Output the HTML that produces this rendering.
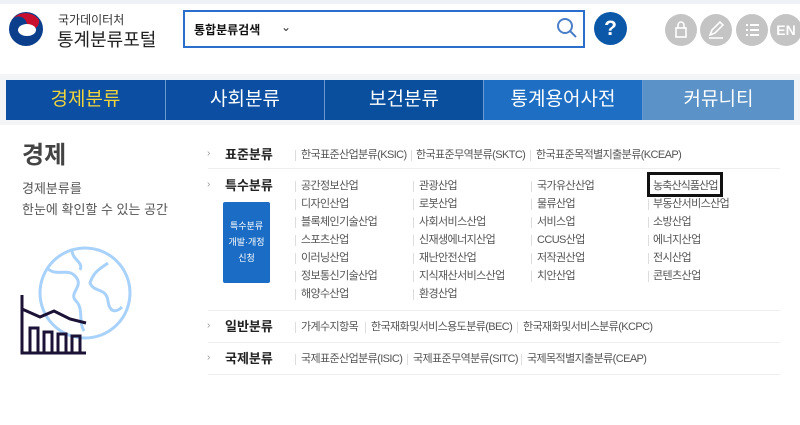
<!DOCTYPE html>
<html><head><meta charset="utf-8"><style>
*{margin:0;padding:0;box-sizing:border-box}
body{width:800px;height:425px;background:#fff;font-family:"Liberation Sans","Noto Sans CJK KR",sans-serif;position:relative;overflow:hidden}
.a{position:absolute;white-space:nowrap}
.tab{position:absolute;top:80px;height:40px;color:#fff;font-size:19px;text-align:center;line-height:40px;border-right:1px solid #6a9ad0}
.t{position:absolute;white-space:nowrap;font-size:11px;color:#555;letter-spacing:-0.6px;line-height:14px}
.p{position:absolute;width:1px;height:11px;background:#ddd}
.lbl{position:absolute;font-size:13px;font-weight:bold;color:#222;line-height:16px}
.ar{position:absolute;font-size:10px;color:#999;line-height:12px}
.hr{position:absolute;left:208px;width:572px;height:1px;background:#eee}
.ic{position:absolute;top:14px;width:32px;height:32px;border-radius:50%;background:#c4c4c4;color:#fff}
</style></head><body>
<div class="a" style="left:0;top:0;width:800px;height:4px;background:#eef1f5"></div>
<svg class="a" style="left:7px;top:9px" width="38" height="40" viewBox="0 0 38 40"><circle cx="19" cy="20" r="17" fill="#0b3f8c"/><path d="M4 12a17 17 0 0 1 28 -1a9 9 0 0 1-13 9a8 8 0 0 0-15 -8z" fill="#c8102e"/><ellipse cx="20" cy="21" rx="9" ry="6" fill="#fff"/></svg>
<div class="a" style="left:58px;top:11px;font-size:12px;color:#333">국가데이터처</div>
<div class="a" style="left:57px;top:26px;font-size:18px;color:#222">통계분류포털</div>
<div class="a" style="left:183px;top:10px;width:402px;height:38px;border:2px solid #2a6fcb;background:#fff"></div>
<div class="a" style="left:194px;top:21px;font-size:12px;font-weight:bold;color:#111">통합분류검색</div>
<div class="a" style="left:281px;top:20px;font-size:12px;color:#333">⌄</div>
<svg class="a" style="left:555px;top:15px" width="24" height="26" viewBox="0 0 24 26"><circle cx="10" cy="11" r="7" fill="none" stroke="#4a7fc8" stroke-width="2"/><line x1="15" y1="16" x2="21" y2="22" stroke="#4a7fc8" stroke-width="2"/></svg>
<div class="a" style="left:594px;top:12px;width:33px;height:33px;border-radius:50%;background:#0b57a8;color:#fff;font-size:21px;font-weight:bold;text-align:center;line-height:33px">?</div>
<div class="ic" style="left:665px"><svg width="32" height="32"><rect x="11" y="14" width="10" height="9" fill="none" stroke="#fff" stroke-width="1.6"/><path d="M13 14v-3a3 3 0 0 1 6 0v3" fill="none" stroke="#fff" stroke-width="1.6"/></svg></div>
<div class="ic" style="left:700px"><svg width="32" height="32"><path d="M10 21l2-5 8-8 3 3-8 8z M9 24h14" fill="none" stroke="#fff" stroke-width="1.6"/></svg></div>
<div class="ic" style="left:736px"><svg width="32" height="32"><path d="M10 11h2M14 11h9M10 16h2M14 16h9M10 21h2M14 21h9" stroke="#fff" stroke-width="2"/></svg></div>
<div class="ic" style="left:770px;font-size:14px;font-weight:bold;text-align:center;line-height:32px">EN</div>
<div class="a" style="left:0;top:74px;width:800px;height:51px;background:#f2f4f6"></div>
<div class="tab" style="left:6px;width:160px;background:#0b4ea2;color:#f1d53a">경제분류</div>
<div class="tab" style="left:166px;width:159px;background:#0b4ea2">사회분류</div>
<div class="tab" style="left:325px;width:159px;background:#0a4f9e">보건분류</div>
<div class="tab" style="left:484px;width:159px;background:#1e6fc4">통계용어사전</div>
<div class="tab" style="left:643px;width:151px;background:#5b92c7;border-right:none">커뮤니티</div>
<div class="a" style="left:6px;top:125px;width:788px;height:295px;background:#fff;border-radius:0 0 6px 6px"></div>
<div class="a" style="left:22px;top:135px;font-size:24px;font-weight:bold;color:#444">경제</div>
<div class="a" style="left:22px;top:178px;font-size:13px;color:#555;line-height:21px">경제분류를<br>한눈에 확인할 수 있는 공간</div>
<svg class="a" style="left:20px;top:245px" width="115" height="115" viewBox="0 0 115 115"><g fill="none" stroke="#a8d2fb" stroke-width="3"><circle cx="65" cy="48" r="45"/><path d="M28 24c10 8 20 -2 28 8s-8 16 0 24 2 20 8 30M52 5c0 10 12 12 8 20M88 18c-8 6-14 8-18 20 4 10 16 4 18 18s10 10 14 6"/></g><g fill="none" stroke="#1b1236" stroke-width="3"><path d="M2 50v58h64"/><path d="M2 64l18 8 14-6 16 8 16 4"/><path d="M10 107v-24h8v24M24 107v-20h8v20M38 107v-18h8v18M52 107v-16h8v16"/></g></svg>

<div class="ar" style="left:207px;top:148px">›</div><div class="lbl" style="left:225px;top:147px">표준분류</div>
<div class="ar" style="left:207px;top:179px">›</div><div class="lbl" style="left:225px;top:178px">특수분류</div>
<div class="ar" style="left:207px;top:320px">›</div><div class="lbl" style="left:225px;top:319px">일반분류</div>
<div class="ar" style="left:207px;top:352px">›</div><div class="lbl" style="left:225px;top:351px">국제분류</div>
<div class="a" style="left:223px;top:202px;width:47px;height:81px;background:#1a6cc4;border-radius:2px;color:#fff;font-size:9px;text-align:center;line-height:16px;padding-top:16px">특수분류<br>개발·개정<br>신청</div>

<div class="hr" style="top:168px"></div>
<div class="hr" style="top:310px"></div>
<div class="hr" style="top:342px"></div>
<div class="hr" style="top:374px"></div>

<div class="p" style="left:295px;top:150px"></div><div class="t" style="left:301px;top:148px">한국표준산업분류(KSIC)</div>
<div class="p" style="left:411px;top:150px"></div><div class="t" style="left:416px;top:148px">한국표준무역분류(SKTC)</div>
<div class="p" style="left:530px;top:150px"></div><div class="t" style="left:536px;top:148px">한국표준목적별지출분류(KCEAP)</div>

<div class="p" style="left:295px;top:181px"></div><div class="t" style="left:301px;top:179px">공간정보산업</div>
<div class="p" style="left:295px;top:199px"></div><div class="t" style="left:301px;top:197px">디자인산업</div>
<div class="p" style="left:295px;top:217px"></div><div class="t" style="left:301px;top:215px">블록체인기술산업</div>
<div class="p" style="left:295px;top:235px"></div><div class="t" style="left:301px;top:233px">스포츠산업</div>
<div class="p" style="left:295px;top:253px"></div><div class="t" style="left:301px;top:251px">이러닝산업</div>
<div class="p" style="left:295px;top:271px"></div><div class="t" style="left:301px;top:269px">정보통신기술산업</div>
<div class="p" style="left:295px;top:289px"></div><div class="t" style="left:301px;top:287px">해양수산업</div>

<div class="p" style="left:413px;top:181px"></div><div class="t" style="left:419px;top:179px">관광산업</div>
<div class="p" style="left:413px;top:199px"></div><div class="t" style="left:419px;top:197px">로봇산업</div>
<div class="p" style="left:413px;top:217px"></div><div class="t" style="left:419px;top:215px">사회서비스산업</div>
<div class="p" style="left:413px;top:235px"></div><div class="t" style="left:419px;top:233px">신재생에너지산업</div>
<div class="p" style="left:413px;top:253px"></div><div class="t" style="left:419px;top:251px">재난안전산업</div>
<div class="p" style="left:413px;top:271px"></div><div class="t" style="left:419px;top:269px">지식재산서비스산업</div>
<div class="p" style="left:413px;top:289px"></div><div class="t" style="left:419px;top:287px">환경산업</div>

<div class="p" style="left:531px;top:181px"></div><div class="t" style="left:537px;top:179px">국가유산산업</div>
<div class="p" style="left:531px;top:199px"></div><div class="t" style="left:537px;top:197px">물류산업</div>
<div class="p" style="left:531px;top:217px"></div><div class="t" style="left:537px;top:215px">서비스업</div>
<div class="p" style="left:531px;top:235px"></div><div class="t" style="left:537px;top:233px">CCUS산업</div>
<div class="p" style="left:531px;top:253px"></div><div class="t" style="left:537px;top:251px">저작권산업</div>
<div class="p" style="left:531px;top:271px"></div><div class="t" style="left:537px;top:269px">치안산업</div>

<div class="a" style="left:647px;top:172px;width:76px;height:25px;border:3px solid #111"></div>
<div class="t" style="left:653px;top:179px;letter-spacing:-0.9px">농축산식품산업</div>
<div class="p" style="left:648px;top:199px"></div><div class="t" style="left:653px;top:197px">부동산서비스산업</div>
<div class="p" style="left:648px;top:217px"></div><div class="t" style="left:653px;top:215px">소방산업</div>
<div class="p" style="left:648px;top:235px"></div><div class="t" style="left:653px;top:233px">에너지산업</div>
<div class="p" style="left:648px;top:253px"></div><div class="t" style="left:653px;top:251px">전시산업</div>
<div class="p" style="left:648px;top:271px"></div><div class="t" style="left:653px;top:269px">콘텐츠산업</div>

<div class="p" style="left:295px;top:322px"></div><div class="t" style="left:301px;top:320px">가계수지항목</div>
<div class="p" style="left:365px;top:322px"></div><div class="t" style="left:371px;top:320px">한국재화및서비스용도분류(BEC)</div>
<div class="p" style="left:517px;top:322px"></div><div class="t" style="left:523px;top:320px">한국재화및서비스분류(KCPC)</div>

<div class="p" style="left:295px;top:354px"></div><div class="t" style="left:301px;top:352px">국제표준산업분류(ISIC)</div>
<div class="p" style="left:407px;top:354px"></div><div class="t" style="left:413px;top:352px">국제표준무역분류(SITC)</div>
<div class="p" style="left:521px;top:354px"></div><div class="t" style="left:527px;top:352px">국제목적별지출분류(CEAP)</div>
</body></html>
